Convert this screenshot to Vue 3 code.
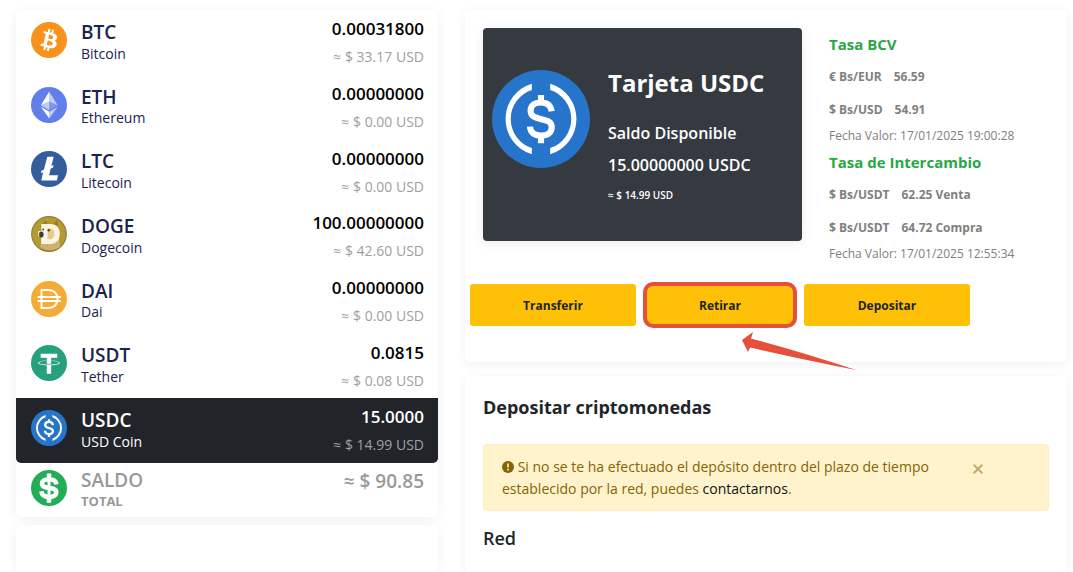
<script setup>
const coins = [
  { id: 'btc', symbol: 'BTC', name: 'Bitcoin', amount: '0.00031800', usd: '33.17' },
  { id: 'eth', symbol: 'ETH', name: 'Ethereum', amount: '0.00000000', usd: '0.00' },
  { id: 'ltc', symbol: 'LTC', name: 'Litecoin', amount: '0.00000000', usd: '0.00' },
  { id: 'doge', symbol: 'DOGE', name: 'Dogecoin', amount: '100.00000000', usd: '42.60' },
  { id: 'dai', symbol: 'DAI', name: 'Dai', amount: '0.00000000', usd: '0.00' },
  { id: 'usdt', symbol: 'USDT', name: 'Tether', amount: '0.0815', usd: '0.08' },
  { id: 'usdc', symbol: 'USDC', name: 'USD Coin', amount: '15.0000', usd: '14.99', active: true },
]

const rates = [
  {
    title: 'Tasa BCV',
    rows: [
      { pair: '€ Bs/EUR', value: '56.59' },
      { pair: '$ Bs/USD', value: '54.91' },
    ],
    date: 'Fecha Valor: 17/01/2025 19:00:28',
  },
  {
    title: 'Tasa de Intercambio',
    rows: [
      { pair: '$ Bs/USDT', value: '62.25 Venta' },
      { pair: '$ Bs/USDT', value: '64.72 Compra' },
    ],
    date: 'Fecha Valor: 17/01/2025 12:55:34',
  },
]
</script>

<template>
  <svg class="sprite" aria-hidden="true">
    <symbol id="btc" viewBox="0 0 32 32">
      <circle cx="16" cy="16" r="16" fill="#f7931a" />
      <path fill="#fff" d="M23.189 14.02c.314-2.096-1.283-3.223-3.465-3.975l.708-2.84-1.728-.43-.69 2.765c-.454-.114-.92-.22-1.385-.326l.695-2.783L15.596 6l-.708 2.839c-.376-.086-.746-.17-1.104-.26l.002-.009-2.384-.595-.46 1.846s1.283.294 1.256.312c.7.175.826.638.805 1.006l-.806 3.235c.048.012.11.03.18.057l-.183-.045-1.13 4.532c-.086.212-.303.531-.793.41.018.025-1.256-.313-1.256-.313l-.858 1.978 2.25.561c.418.105.828.215 1.231.318l-.715 2.872 1.727.43.708-2.84c.472.127.93.245 1.378.357l-.706 2.828 1.728.43.715-2.866c2.948.558 5.164.333 6.097-2.333.752-2.146-.037-3.385-1.588-4.192 1.13-.26 1.98-1.003 2.207-2.538zm-3.95 5.538c-.533 2.147-4.148.986-5.32.695l.95-3.805c1.172.293 4.929.872 4.37 3.11zm.535-5.569c-.487 1.953-3.495.96-4.47.717l.86-3.45c.975.243 4.118.696 3.61 2.733z" />
    </symbol>
    <symbol id="eth" viewBox="0 0 32 32">
      <circle cx="16" cy="16" r="16" fill="#627eea" />
      <g fill="#fff">
        <path fill-opacity=".6" d="M16.2 4v8.9l7.5 3.3z" />
        <path d="M16.2 4 8.8 16.2l7.4-3.3z" />
        <path fill-opacity=".6" d="M16.2 22v6l7.5-10.4z" />
        <path d="M16.2 28v-6l-7.4-4.4z" />
        <path fill-opacity=".2" d="m16.2 20.6 7.5-4.4-7.5-3.3z" />
        <path fill-opacity=".6" d="m8.8 16.2 7.4 4.4v-7.7z" />
      </g>
    </symbol>
    <symbol id="ltc" viewBox="0 0 32 32">
      <circle cx="16" cy="16" r="16" fill="#345d9d" />
      <path fill="#fff" d="M14.500 5h5.700l-2.100 8.300 2-.8-.6 2.300-2 .8-1.400 6H24l-1 4.600H9.100l1.700-7.300-2 .8.6-2.300 2-.8z" />
    </symbol>
    <symbol id="doge" viewBox="0 0 32 32">
      <circle cx="16" cy="16" r="15.4" fill="#b59a30" stroke="#8e8045" />
      <path fill="#9d7838" d="m10.2 8 2.5-4.5 2.4 4M20 7l3.4-3.5.8 6z" />
      <path fill="#e3cc85" d="M9 15c1-7 12-10 15-3l1 12 1 3c-5 4-13 4-18 0l4-5z" />
      <path fill="#cdb16c" d="M10 24c5 1 9 0 14-2l2 5c-5 4-13 4-18 0z" />
      <path fill="#f8f3e4" fill-rule="evenodd" d="M9.2 7.2h8.2c5.2 0 8.2 3.3 8.2 8.5 0 5.6-3.3 9.2-9 9.2H9V18H6.500v-4.600h2.700zm5.600 4v9.400c4.100.4 6-1.500 6-4.900 0-3.600-2-4.900-6-4.500z" />
      <ellipse cx="9.2" cy="16.4" rx="2" ry="2.7" fill="#363c3e" />
      <circle cx="15.8" cy="12.7" r="1.1" fill="#514528" />
      <circle cx="10.8" cy="12" r=".8" fill="#514528" />
    </symbol>
    <symbol id="dai" viewBox="0 0 32 32">
      <circle cx="16" cy="16" r="16" fill="#f5ac37" />
      <g fill="none" stroke="#fff" stroke-width="1.7">
        <path d="M9.3 8h6.1c5 0 8.3 3.3 8.3 8s-3.3 8-8.3 8H9.3z" />
        <path d="M6 14.2h20.5M6 17.8h20.5" />
      </g>
    </symbol>
    <symbol id="usdt" viewBox="0 0 32 32">
      <circle cx="16" cy="16" r="16" fill="#26a17b" />
      <path fill="#fff" d="M17.922 17.383v-.002c-.11.008-.677.042-1.942.042-1.01 0-1.721-.03-1.971-.042v.003c-3.888-.171-6.79-.848-6.79-1.658 0-.809 2.902-1.486 6.79-1.66v2.644c.254.018.982.061 1.988.061 1.207 0 1.812-.05 1.925-.06v-2.643c3.88.173 6.775.85 6.775 1.658 0 .81-2.895 1.485-6.775 1.657m0-3.59v-2.366h5.414V7.819H8.595v3.608h5.414v2.365c-4.4.202-7.709 1.074-7.709 2.118 0 1.044 3.309 1.915 7.709 2.118v7.582h3.913v-7.584c4.393-.202 7.694-1.073 7.694-2.116 0-1.043-3.301-1.914-7.694-2.117" />
    </symbol>
    <symbol id="usdc" viewBox="0 0 32 32">
      <circle cx="16" cy="16" r="16" fill="#2775ca" />
      <path fill="#fff" d="M13 4.500V6.500a10 10 0 0 0 0 19v2A12 12 0 0 1 13 4.500zM19 4.500V6.500a10 10 0 0 1 0 19v2A12 12 0 0 0 19 4.500z" />
      <path fill="none" stroke="#fff" stroke-width="2" d="M16 8.200v2.400M16 21.400v2.500M19.500 13.500c-.3-1.900-1.500-2.900-3.500-2.900-2.100 0-3.400 1-3.400 2.700 0 3.900 6.900 1.600 6.900 5.400 0 1.800-1.400 2.700-3.500 2.700-2.200 0-3.500-1-3.600-2.900" />
    </symbol>
    <symbol id="total" viewBox="0 0 32 32">
      <circle cx="16" cy="16" r="16" fill="#23ad58" />
      <path fill="none" stroke="#fff" stroke-width="4" d="M16 3v5M16 24v5M22.600 12.800c-.4-3-2.700-4.500-6.500-4.500-4 0-6.300 1.500-6.300 4 0 5.600 12.700 1.700 12.700 7.400 0 2.600-2.400 4.200-6.500 4.200-4.300 0-6.500-1.700-6.800-5" />
      <path stroke="#fff" stroke-width="2.6" d="M16 7v18" />
    </symbol>
  </svg>

  <main class="page">
    <div class="column">
      <section class="panel wallet">
        <ul class="coins">
          <li v-for="coin in coins" :key="coin.id" class="coin" :class="{ active: coin.active }">
            <svg class="icon" aria-hidden="true"><use :href="'#' + coin.id" /></svg>
            <div class="label">
              <div class="symbol">{{ coin.symbol }}</div>
              <div class="name">{{ coin.name }}</div>
            </div>
            <div class="balance">
              <div class="amount">{{ coin.amount }}</div>
              <div class="usd">≈ $ {{ coin.usd }} USD</div>
            </div>
          </li>
        </ul>
        <div class="total">
          <svg class="icon" aria-hidden="true"><use href="#total" /></svg>
          <div class="label">
            <div class="symbol">SALDO</div>
            <div class="name">TOTAL</div>
          </div>
          <div class="sum">≈ $ 90.85</div>
        </div>
      </section>
      <section class="panel empty"></section>
    </div>

    <div class="column">
      <section class="panel summary">
        <div class="overview">
          <article class="card">
            <svg class="card-icon" aria-hidden="true"><use href="#usdc" /></svg>
            <div class="card-text">
              <h2>Tarjeta USDC</h2>
              <p>Saldo Disponible</p>
              <p>15.00000000 USDC</p>
              <p class="card-usd">≈ $ 14.99 USD</p>
            </div>
          </article>
          <div class="rates">
            <section v-for="rate in rates" :key="rate.title">
              <h3>{{ rate.title }}</h3>
              <p v-for="row in rate.rows" :key="row.value" class="rate">
                <span>{{ row.pair }}</span><span>{{ row.value }}</span>
              </p>
              <p class="date">{{ rate.date }}</p>
            </section>
          </div>
        </div>
        <div class="actions">
          <button type="button">Transferir</button>
          <button type="button" class="marked">Retirar</button>
          <button type="button">Depositar</button>
          <svg class="arrow" viewBox="0 0 114 38" aria-hidden="true">
            <path fill="#e54f3b" d="M0 8 11 0 9 6.500Q60 20 114 38 58 27 8 15.500L6 20z" />
          </svg>
        </div>
      </section>

      <section class="panel deposit">
        <h2>Depositar criptomonedas</h2>
        <div class="alert" role="alert">
          <p>
            <svg class="warn" viewBox="0 0 12 12" aria-hidden="true">
              <circle cx="6" cy="6" r="6" fill="#856404" />
              <path stroke="#fff3cd" stroke-width="1.6" d="M6 2.500v4M6 7.800v1.600" />
            </svg>
            Si no se te ha efectuado el depósito dentro del plazo de tiempo establecido por la red, puedes <a href="#">contactarnos</a>.
          </p>
          <button type="button" class="close" aria-label="Cerrar">
            <svg viewBox="0 0 10 10" aria-hidden="true"><path stroke="#c2ab68" stroke-width="2" d="m.7.7 8.600 8.600M9.300.7.7 9.300" /></svg>
          </button>
        </div>
        <h3>Red</h3>
      </section>
    </div>
  </main>
</template>

<style>
body {
  margin: 0;
  background: #fff;
  overflow: hidden;
}
</style>

<style scoped>
.sprite {
  position: absolute;
  width: 0;
  height: 0;
}
.page {
  display: grid;
  grid-template-columns: 422fr 602fr;
  gap: 27px;
  padding: 10px 6px 0 16px;
  height: 100vh;
  box-sizing: border-box;
  color: #212529;
  font-family: "Open Sans", "Noto Sans", sans-serif;
  font-size: 14px;
}
.column {
  display: flex;
  flex-direction: column;
  min-width: 0;
}
h2, h3, p, ul {
  margin: 0;
  padding: 0;
}
.panel {
  background: #fff;
  border-radius: 5px;
  box-shadow: 0 2px 12px rgba(0, 0, 0, 0.06);
}
.empty {
  flex: 1;
  margin-top: 8px;
}
.coins {
  list-style: none;
}
.coin, .total {
  display: flex;
  padding: 0 14px 0 15px;
}
.icon {
  width: 36px;
  height: 36px;
  margin: 12px 14px 0 0;
  flex: none;
}
.label {
  flex: 1;
  padding: 12px 0 11px;
  color: #1b2350;
}
.symbol {
  font-size: 19px;
  line-height: 1.14;
  font-weight: 600;
}
.name {
  line-height: 20px;
}
.balance {
  align-self: center;
  padding-top: 2px;
  text-align: right;
}
.amount {
  color: #000;
  font-size: 17px;
  line-height: 28px;
  font-weight: 600;
}
.usd {
  color: #a0a0a0;
  line-height: 28px;
}
.active {
  background: #212529;
  border-radius: 0 0 5px 5px;
}
.active .label, .active .amount {
  color: #fff;
}
.total {
  color: #999;
}
.total .icon {
  margin-top: 7px;
}
.total .label {
  padding: 7px 0 6px;
  color: #999;
}
.total .name {
  font-size: 13px;
  font-weight: 700;
}
.sum {
  padding-top: 7px;
  font-size: 19px;
  line-height: 22px;
  font-weight: 600;
}
.summary {
  padding: 18px 18px 36px;
}
.overview {
  display: flex;
  gap: 27px;
}
.card {
  display: flex;
  gap: 18px;
  flex: 0 0 319px;
  height: 213px;
  box-sizing: border-box;
  padding: 0 9px;
  background: #343a40;
  border-radius: 4px;
  box-shadow: 0 2px 12px rgba(0, 0, 0, 0.08);
  color: #fff;
}
.card-icon {
  width: 98px;
  height: 98px;
  margin-top: 42px;
  flex: none;
}
.card-text {
  padding-top: 35px;
  white-space: nowrap;
}
.card-text h2 {
  margin-bottom: 14px;
  font-size: 24px;
  line-height: 40px;
  font-weight: 700;
}
.card-text p {
  font-size: 16px;
  line-height: 32px;
  font-weight: 600;
}
.card-text .card-usd {
  font-size: 10px;
  line-height: 28px;
}
.rates {
  white-space: nowrap;
}
.rates h3 {
  color: #28a745;
  font-size: 15px;
  line-height: 32px;
  font-weight: 700;
}
.rate {
  display: flex;
  gap: 12px;
  color: #808080;
  font-size: 12px;
  line-height: 33px;
  font-weight: 700;
}
.date {
  color: #808080;
  font-size: 12px;
  line-height: 20px;
}
.actions {
  position: relative;
  display: flex;
  gap: 7px;
  width: 500px;
  max-width: 100%;
  margin: 20px 0 0 -13px;
}
.actions button {
  flex: 166;
  height: 42px;
  padding: 0;
  border: 0;
  border-radius: 3px;
  background: #ffc107;
  color: #212529;
  font: inherit;
  font-size: 12px;
  font-weight: 700;
}
.actions .marked {
  flex: 146;
  height: 46px;
  margin: -2px 0;
  border: 4px solid #e54f3b;
  border-radius: 10px;
}
.arrow {
  position: absolute;
  top: 48px;
  left: 272px;
  width: 114px;
  height: 38px;
}
.deposit {
  flex: 1;
  margin-top: 14px;
  padding: 18px;
}
.deposit h2 {
  font-size: 18px;
  line-height: 26px;
  font-weight: 700;
}
.deposit h3 {
  margin-top: 14px;
  font-size: 18px;
  line-height: 26px;
  font-weight: 600;
}
.alert {
  display: flex;
  align-items: flex-start;
  margin-top: 24px;
  padding: 11px 65px 10px 18px;
  border: 1px solid #ffeeba;
  border-radius: 4px;
  background: #fff3cd;
  color: #856404;
  line-height: 22px;
}
.alert p {
  flex: 1;
  padding-right: 40px;
}
.alert a {
  color: #111;
  text-decoration: none;
}
.warn {
  width: 12px;
  height: 12px;
  vertical-align: -1px;
}
.close {
  padding: 8px 0;
  border: 0;
  background: none;
  line-height: 0;
}
.close svg {
  width: 10px;
  height: 10px;
}
</style>
